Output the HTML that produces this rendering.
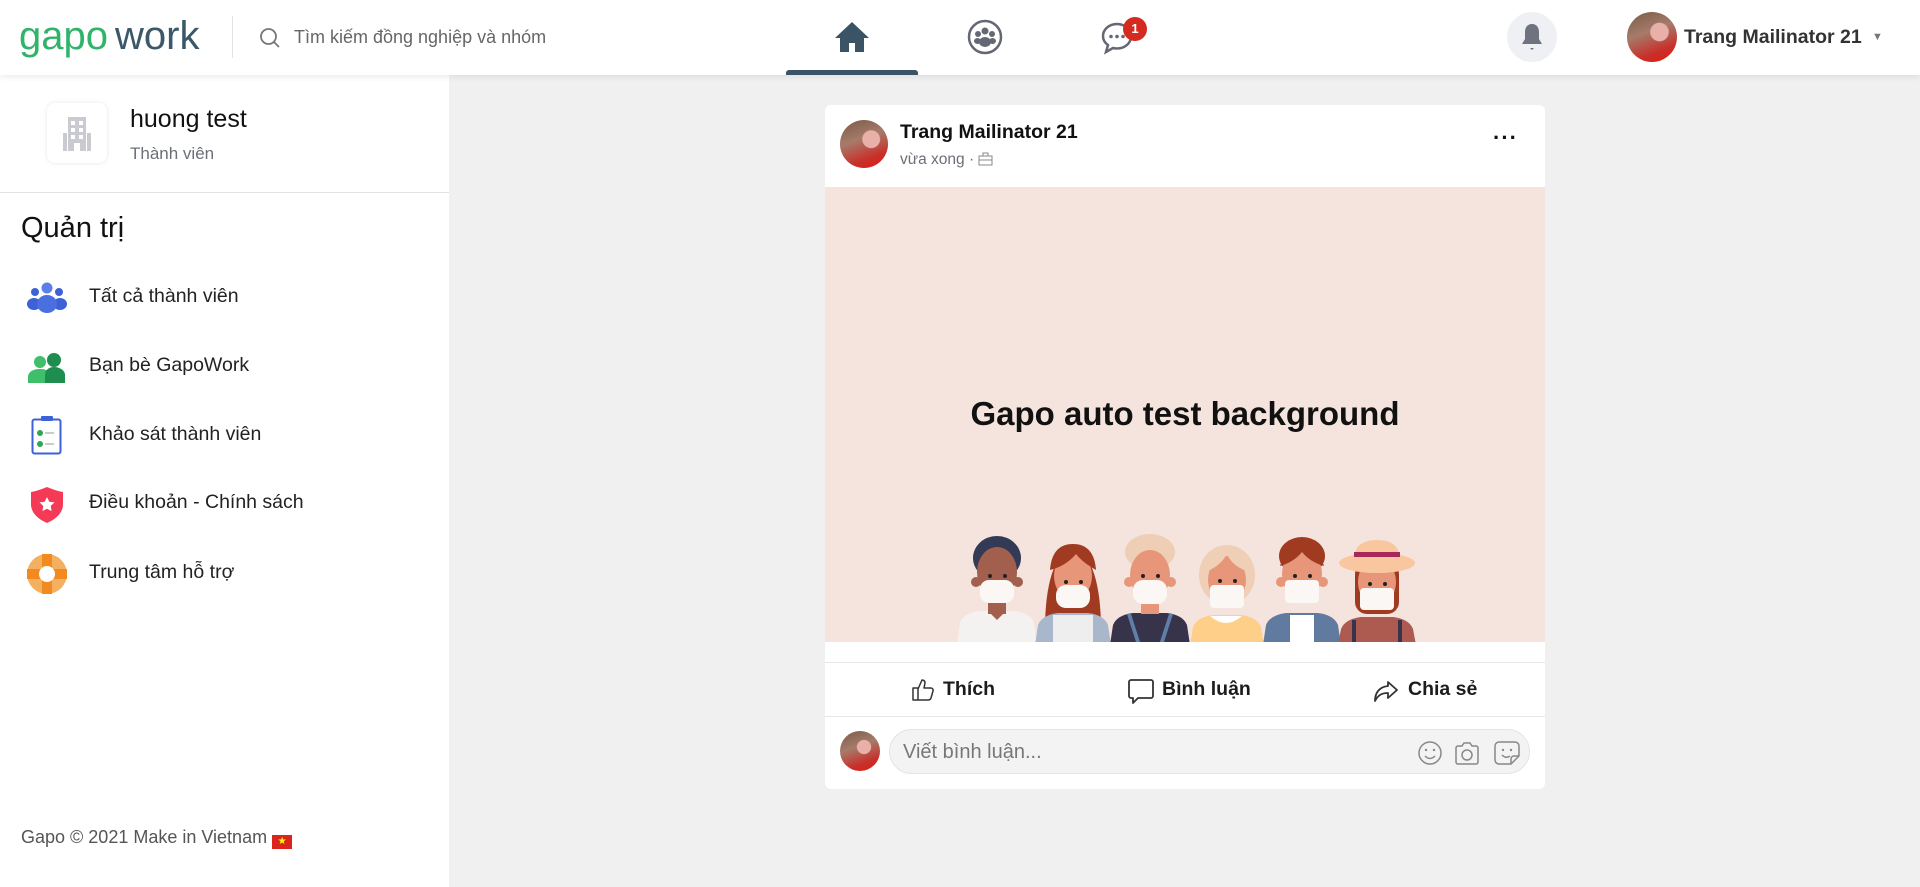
<!DOCTYPE html>
<html><head><meta charset="utf-8"><style>
*{box-sizing:border-box;margin:0;padding:0}
body{width:1920px;height:887px;background:#f0f0f0;font-family:"Liberation Sans",sans-serif;position:relative;overflow:hidden;color:#1c1c1c}
.hdr{position:absolute;left:0;top:0;width:1920px;height:75px;background:#fff;box-shadow:0 2px 6px rgba(0,0,0,.08);z-index:2}
.abs{position:absolute}
.side{position:absolute;left:0;top:75px;width:449px;height:812px;background:#fff}
.menu{position:absolute;left:89px;font-size:19.5px;color:#222}
.card{position:absolute;left:825px;top:105px;width:720px;height:684px;background:#fff;border-radius:6px}
.act{position:absolute;top:675px;font-size:19.5px;font-weight:bold;color:#1c1c1c}
</style></head><body>
<div class="hdr">
 <div class="abs" style="left:19px;top:14px;font-size:40px;letter-spacing:0"><span style="color:#30b36b">gapo</span><span style="color:#3a5869;margin-left:7px">work</span></div>
 <div class="abs" style="left:232px;top:16px;width:1px;height:42px;background:#e3e3e3"></div>
 <svg class="abs" style="left:259px;top:27px" width="22" height="22" viewBox="0 0 22 22"><circle cx="9.5" cy="9.5" r="7.5" fill="none" stroke="#777" stroke-width="1.8"/><path d="M15 15l5 5" stroke="#777" stroke-width="1.8"/></svg>
 <div class="abs" style="left:294px;top:27px;font-size:18px;color:#666">Tìm kiếm đồng nghiệp và nhóm</div>
 <svg class="abs" style="left:834px;top:21px" width="36" height="32" viewBox="0 0 36 32"><path d="M18 1L1 17h5v14h9v-9h6v9h9V17h5z" fill="#3a5466"/></svg>
 <div class="abs" style="left:786px;top:70px;width:132px;height:5px;background:#3a5466;border-radius:3px 3px 0 0"></div>
 <svg class="abs" style="left:966px;top:18px" width="38" height="38" viewBox="0 0 38 38"><circle cx="19" cy="19" r="16" fill="none" stroke="#656874" stroke-width="2.5"/><circle cx="19" cy="13" r="3.5" fill="#656874"/><circle cx="12" cy="16" r="3" fill="#656874"/><circle cx="26" cy="16" r="3" fill="#656874"/><ellipse cx="19" cy="24" rx="6" ry="5" fill="#656874"/><ellipse cx="11.5" cy="23" rx="3.5" ry="3" fill="#656874"/><ellipse cx="26.5" cy="23" rx="3.5" ry="3" fill="#656874"/></svg>
 <svg class="abs" style="left:1100px;top:20px" width="36" height="36" viewBox="0 0 36 36"><path d="M17 4C9 4 3 9.5 3 16c0 4 2 7 5 9l-2 7 7-4c1.3.4 2.6.5 4 .5 8 0 14-5.5 14-12S25 4 17 4z" fill="none" stroke="#656874" stroke-width="2.5"/><circle cx="11" cy="16.5" r="1.8" fill="#656874"/><circle cx="17" cy="16.5" r="1.8" fill="#656874"/><circle cx="23" cy="16.5" r="1.8" fill="#656874"/></svg>
 <div class="abs" style="left:1123px;top:17px;width:24px;height:24px;border-radius:12px;background:#d42a20;color:#fff;font-size:13px;font-weight:bold;text-align:center;line-height:24px">1</div>
 <div class="abs" style="left:1507px;top:12px;width:50px;height:50px;border-radius:25px;background:#eef0f3"></div>
 <svg class="abs" style="left:1519px;top:22px" width="26" height="30" viewBox="0 0 26 30"><path d="M13 2c-5 0-7 4-7 8v7l-3 5h20l-3-5v-7c0-4-2-8-7-8z" fill="#6f7380"/><path d="M11 26l2 2 2-2z" fill="#6f7380"/></svg>
 <div class="abs" style="left:1627px;top:12px;width:50px;height:50px;border-radius:25px;background:radial-gradient(circle at 65% 40%,#e8b0a8 0 20%,transparent 22%),linear-gradient(160deg,#7a5a48 0%,#a67b6a 40%,#c8302a 75%,#e01a10 100%)"></div>
 <div class="abs" style="left:1684px;top:26px;font-size:19.5px;font-weight:bold;color:#333">Trang Mailinator 21</div>
 <div class="abs" style="left:1872px;top:31px;font-size:11px;color:#777">▼</div>
</div>

<div class="side">
 <div class="abs" style="left:47px;top:28px;width:60px;height:60px;border-radius:8px;background:#fff;box-shadow:0 0 4px rgba(0,0,0,.1)"></div>
 <svg class="abs" style="left:62px;top:40px" width="30" height="36" viewBox="0 0 30 36"><rect x="6" y="2" width="18" height="34" fill="#c9cbd0"/><rect x="1" y="18" width="4" height="18" fill="#c9cbd0"/><rect x="25" y="18" width="4" height="18" fill="#c9cbd0"/><g fill="#fff"><rect x="9" y="6" width="4" height="4"/><rect x="17" y="6" width="4" height="4"/><rect x="9" y="13" width="4" height="4"/><rect x="17" y="13" width="4" height="4"/><rect x="9" y="20" width="4" height="4"/><rect x="17" y="20" width="4" height="4"/><rect x="12" y="28" width="6" height="8"/></g></svg>
 <div class="abs" style="left:130px;top:30px;font-size:25px;color:#111">huong test</div>
 <div class="abs" style="left:130px;top:69px;font-size:17px;color:#6a6f78">Thành viên</div>
 <div class="abs" style="left:0;top:117px;width:449px;height:1px;background:#e2e2e2"></div>
 <div class="abs" style="left:21px;top:137px;font-size:29px;color:#111">Quản trị</div>

 <svg class="abs" style="left:27px;top:207px" width="40" height="32" viewBox="0 0 40 32"><circle cx="20" cy="6" r="5.5" fill="#5a7fe8"/><circle cx="8" cy="10" r="4" fill="#3d62d8"/><circle cx="32" cy="10" r="4" fill="#3d62d8"/><ellipse cx="7" cy="22" rx="7" ry="6" fill="#3d62d8"/><ellipse cx="33" cy="22" rx="7" ry="6" fill="#3d62d8"/><ellipse cx="20" cy="22" rx="10" ry="9" fill="#4a6fe0"/></svg>
 <div class="menu" style="top:210px">Tất cả thành viên</div>
 <svg class="abs" style="left:27px;top:277px" width="40" height="32" viewBox="0 0 40 32"><circle cx="13" cy="10" r="6" fill="#3fbf6a"/><path d="M1 31v-6c0-5 5-8 12-8s12 3 12 8v6z" fill="#3fbf6a"/><circle cx="27" cy="8" r="7" fill="#1e8e4e"/><path d="M18 31v-8c0-5 4-8 9-8s11 3 11 8v8z" fill="#1e8e4e"/></svg>
 <div class="menu" style="top:279px">Bạn bè GapoWork</div>
 <svg class="abs" style="left:31px;top:341px" width="32" height="40" viewBox="0 0 32 40"><rect x="1.5" y="3.5" width="28" height="34" rx="2" fill="#fff" stroke="#3d62d8" stroke-width="2"/><rect x="10" y="0" width="12" height="5" rx="1" fill="#3d62d8"/><circle cx="9" cy="17" r="3" fill="#2fa64f"/><circle cx="9" cy="28" r="3" fill="#2fa64f"/><rect x="14" y="16" width="9" height="2" fill="#ccc"/><rect x="14" y="27" width="9" height="2" fill="#ccc"/></svg>
 <div class="menu" style="top:348px">Khảo sát thành viên</div>
 <svg class="abs" style="left:29px;top:411px" width="36" height="38" viewBox="0 0 36 38"><path d="M2 6c6-1 11-3 16-5 5 2 10 4 16 5v12c0 9-7 15-16 19C9 33 2 27 2 18z" fill="#f53a57"/><path d="M18 11l2.3 4.7 5.2.7-3.8 3.6.9 5.1-4.6-2.4-4.6 2.4.9-5.1-3.8-3.6 5.2-.7z" fill="#fff"/></svg>
 <div class="menu" style="top:416px">Điều khoản - Chính sách</div>
 <svg class="abs" style="left:27px;top:479px" width="40" height="40" viewBox="0 0 40 40"><circle cx="20" cy="20" r="20" fill="#f2b060"/><path d="M15 0h10v40H15zM0 15h40v10H0z" fill="#f28a20"/><circle cx="20" cy="20" r="8" fill="#fff"/></svg>
 <div class="menu" style="top:486px">Trung tâm hỗ trợ</div>

 <div class="abs" style="left:21px;top:752px;font-size:18px;color:#555">Gapo © 2021 Make in Vietnam <span style="display:inline-block;width:20px;height:14px;background:#da251d;color:#ff0;font-size:10px;line-height:14px;text-align:center;vertical-align:-1px">★</span></div>
</div>

<div class="card">
 <div class="abs" style="left:15px;top:15px;width:48px;height:48px;border-radius:24px;background:radial-gradient(circle at 65% 40%,#e8b0a8 0 20%,transparent 22%),linear-gradient(160deg,#7a5a48 0%,#a67b6a 40%,#c8302a 75%,#e01a10 100%)"></div>
 <div class="abs" style="left:75px;top:16px;font-size:19.5px;font-weight:bold;color:#111">Trang Mailinator 21</div>
 <div class="abs" style="left:75px;top:46px;font-size:15.5px;color:#6a6f78">vừa xong · <svg width="15" height="14" viewBox="0 0 15 14" style="vertical-align:-2px"><rect x="1" y="4" width="13" height="9" fill="none" stroke="#888"/><rect x="5" y="1" width="5" height="3" fill="none" stroke="#888"/><path d="M1 8h13" stroke="#888"/></svg></div>
 <div class="abs" style="left:668px;top:20px;font-size:22px;font-weight:bold;color:#111;letter-spacing:1px">···</div>
 <div class="abs" style="left:0;top:82px;width:720px;height:455px;background:#f5e4de;overflow:hidden">
  <div class="abs" style="left:0;top:208px;width:720px;text-align:center;font-size:33px;font-weight:bold;color:#111">Gapo auto test background</div>
  <svg class="abs" style="left:125px;top:343px" width="480" height="115" viewBox="0 0 480 115">
   <path d="M7 115l3-22q3-10 20-12h34q17 2 20 12l3 22z" fill="#f4f1f1"/>
   <rect x="38" y="62" width="18" height="22" fill="#a35f4e"/>
   <path d="M38 81h18l-9 9z" fill="#a35f4e"/>
   <ellipse cx="47" cy="28" rx="24" ry="22" fill="#333a55"/>
   <ellipse cx="47" cy="42" rx="20" ry="25" fill="#a35f4e"/>
   <circle cx="26" cy="52" r="5" fill="#a35f4e"/><circle cx="68" cy="52" r="5" fill="#a35f4e"/>
   <rect x="30" y="50" width="34" height="23" rx="9" fill="#fbf7f5"/>
   <path d="M95 100q0-70 28-86q28 16 28 86z" fill="#a03a20"/>
   <path d="M85 115l3-20q4-10 20-12h30q16 2 20 12l3 20z" fill="#a9b7cd"/>
   <rect x="103" y="85" width="40" height="30" fill="#eee"/>
   <ellipse cx="123" cy="46" rx="19" ry="24" fill="#e8967a"/>
   <path d="M100 40q2-26 23-26q21 0 23 26q-14-8-20-16q-10 12-26 16z" fill="#a03a20"/>
   <rect x="106" y="55" width="34" height="23" rx="10" fill="#fbf7f5"/>
   <path d="M160 115l3-20q4-10 20-12h34q16 2 20 12l3 20z" fill="#37334a"/>
   <path d="M177 84l10 31h4l-10-31zM223 84l-10 31h-4l10-31z" fill="#5f7fa8"/>
   <rect x="191" y="66" width="18" height="18" fill="#e8967a"/>
   <ellipse cx="200" cy="22" rx="25" ry="18" fill="#eecfb5"/>
   <ellipse cx="200" cy="45" rx="20" ry="25" fill="#e8967a"/>
   <circle cx="179" cy="52" r="5" fill="#e8967a"/><circle cx="221" cy="52" r="5" fill="#e8967a"/>
   <rect x="183" y="50" width="34" height="24" rx="10" fill="#fbf7f5"/>
   <path d="M240 115l3-18q4-10 20-12h28q16 2 20 12l3 18z" fill="#fdcf88"/>
   <path d="M260 86q16 14 32 0z" fill="#fff"/>
   <ellipse cx="277" cy="45" rx="28" ry="30" fill="#efcfb5"/>
   <ellipse cx="277" cy="50" rx="19" ry="24" fill="#e8967a"/>
   <path d="M254 42q4-26 23-26q21 2 24 26q-18-4-24-18q-8 14-23 18z" fill="#efcfb5"/>
   <rect x="260" y="55" width="34" height="23" rx="4" fill="#fbf7f5"/>
   <path d="M313 115l3-20q4-10 20-12h32q16 2 20 12l3 20z" fill="#617aa0"/>
   <rect x="340" y="85" width="24" height="30" fill="#fff"/>
   <ellipse cx="352" cy="26" rx="23" ry="19" fill="#a03a20"/>
   <ellipse cx="352" cy="44" rx="20" ry="25" fill="#e8967a"/>
   <path d="M330 36q6-20 22-20q16 0 22 20q-14-4-22-14q-8 10-22 14z" fill="#a03a20"/>
   <circle cx="331" cy="52" r="5" fill="#e8967a"/><circle cx="373" cy="52" r="5" fill="#e8967a"/>
   <rect x="335" y="50" width="34" height="23" rx="4" fill="#fbf7f5"/>
   <path d="M388 115l3-16q4-10 20-12h32q16 2 20 12l3 16z" fill="#ad5a50"/>
   <path d="M402 90h4v25h-4zM448 90h4v25h-4z" fill="#37334a"/>
   <rect x="405" y="32" width="44" height="52" rx="12" fill="#a03a20"/>
   <ellipse cx="427" cy="52" rx="19" ry="24" fill="#e8967a"/>
   <ellipse cx="427" cy="33" rx="38" ry="10" fill="#f8c7a0"/>
   <path d="M404 30q0-20 23-20q23 0 23 20z" fill="#f8c7a0"/>
   <path d="M404 22h46v5h-46z" fill="#a8285a"/>
   <rect x="410" y="58" width="34" height="22" rx="4" fill="#fbf7f5"/>
   <g fill="#222"><circle cx="40" cy="46" r="2"/><circle cx="55" cy="46" r="2"/><circle cx="116" cy="52" r="2"/><circle cx="131" cy="52" r="2"/><circle cx="193" cy="46" r="2"/><circle cx="208" cy="46" r="2"/><circle cx="270" cy="51" r="2"/><circle cx="285" cy="51" r="2"/><circle cx="345" cy="46" r="2"/><circle cx="360" cy="46" r="2"/><circle cx="420" cy="54" r="2"/><circle cx="435" cy="54" r="2"/></g>
  </svg>
 </div>
 <div class="abs" style="left:0;top:557px;width:720px;height:1px;background:#e6e6e6"></div>
 <svg class="abs" style="left:86px;top:573px" width="24" height="24" viewBox="0 0 24 24"><path d="M2 10h5v12H2zM7 11l4-9c2 0 3 1 3 3l-1 5h7c1.5 0 2.5 1.5 2 3l-2 7c-.5 1.5-1.5 2-3 2H7" fill="none" stroke="#333" stroke-width="1.5" stroke-linejoin="round"/></svg>
 <div class="act" style="left:118px;top:573px">Thích</div>
 <svg class="abs" style="left:302px;top:573px" width="28" height="28" viewBox="0 0 28 28"><path d="M4 2h20a2 2 0 0 1 2 2v14a2 2 0 0 1-2 2H11l-5 5v-5H4a2 2 0 0 1-2-2V4a2 2 0 0 1 2-2z" fill="none" stroke="#333" stroke-width="1.8" stroke-linejoin="round"/></svg>
 <div class="act" style="left:337px;top:573px">Bình luận</div>
 <svg class="abs" style="left:548px;top:575px" width="26" height="24" viewBox="0 0 26 24"><path d="M15 2l9 8-9 8v-5c-6 0-10 2-13 8 0-8 4-14 13-15z" fill="none" stroke="#333" stroke-width="1.8" stroke-linejoin="round"/></svg>
 <div class="act" style="left:583px;top:573px">Chia sẻ</div>
 <div class="abs" style="left:0;top:611px;width:720px;height:1px;background:#e6e6e6"></div>
 <div class="abs" style="left:15px;top:626px;width:40px;height:40px;border-radius:20px;background:radial-gradient(circle at 60% 40%,#e8b0a8 0 20%,transparent 22%),linear-gradient(160deg,#7a5a48 0%,#a67b6a 40%,#c8302a 75%,#e01a10 100%)"></div>
 <div class="abs" style="left:64px;top:624px;width:641px;height:45px;border-radius:23px;background:#f3f3f3;border:1px solid #e4e4e4"></div>
 <div class="abs" style="left:78px;top:636px;font-size:20px;color:#777">Viết bình luận...</div>
 <svg class="abs" style="left:592px;top:634px" width="110" height="28" viewBox="0 0 110 28"><circle cx="13" cy="14" r="11" fill="none" stroke="#888" stroke-width="1.5"/><circle cx="9" cy="11" r="1.2" fill="#888"/><circle cx="17" cy="11" r="1.2" fill="#888"/><path d="M8 17q5 5 10 0" fill="none" stroke="#888" stroke-width="1.5"/><path d="M41 7h4l2-3h6l2 3h4a2 2 0 0 1 2 2v14a2 2 0 0 1-2 2H41a2 2 0 0 1-2-2V9a2 2 0 0 1 2-2z" fill="none" stroke="#888" stroke-width="1.5"/><circle cx="50" cy="16" r="5" fill="none" stroke="#888" stroke-width="1.5"/><path d="M82 3h16a4 4 0 0 1 4 4v10l-8 8H82a4 4 0 0 1-4-4V7a4 4 0 0 1 4-4z" fill="none" stroke="#888" stroke-width="1.5"/><path d="M94 25v-5a3 3 0 0 1 3-3h5" fill="none" stroke="#888" stroke-width="1.5"/><circle cx="86" cy="11" r="1.2" fill="#888"/><circle cx="94" cy="11" r="1.2" fill="#888"/><path d="M85 16q4 4 8 1" fill="none" stroke="#888" stroke-width="1.5"/></svg>
</div>
</body></html>
